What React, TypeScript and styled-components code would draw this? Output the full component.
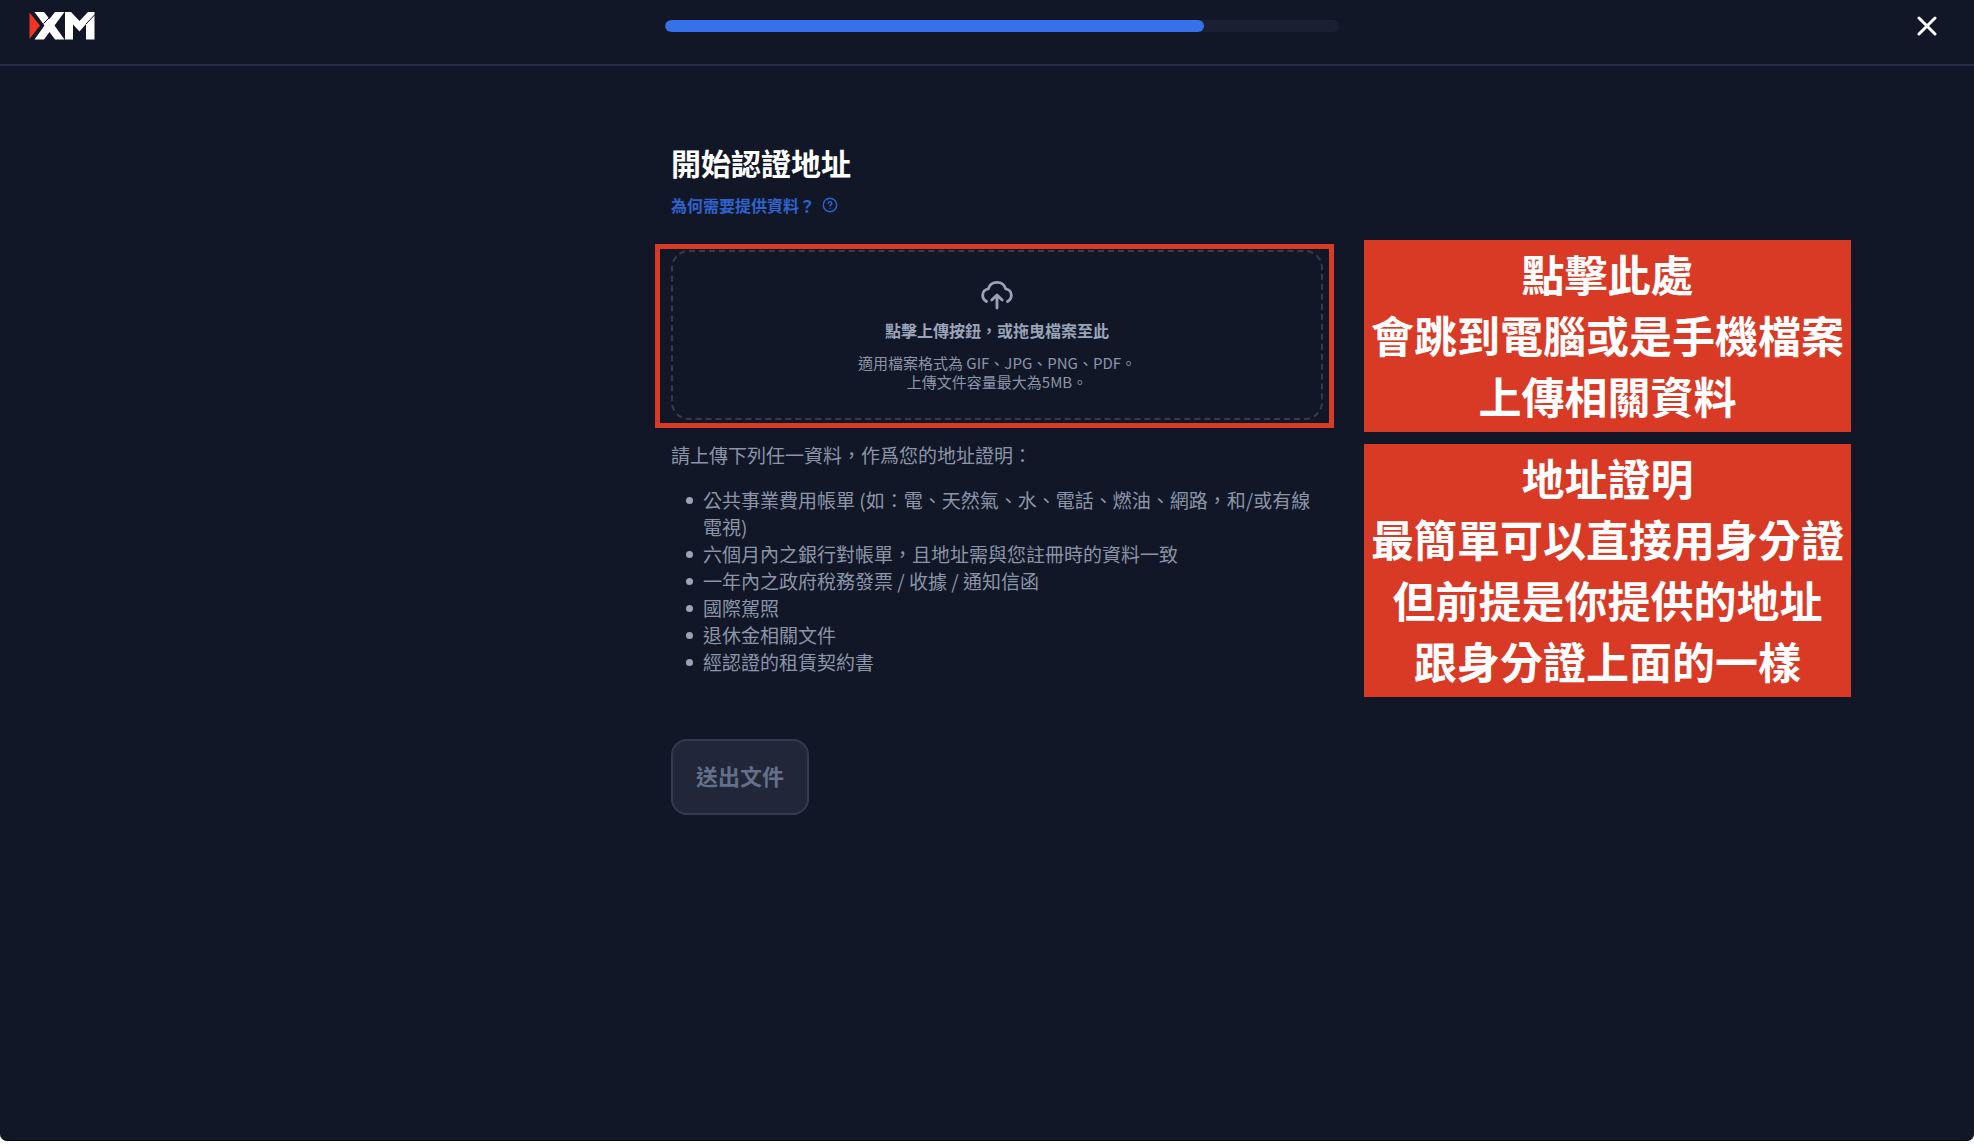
import React from "react";
import styled, { createGlobalStyle } from "styled-components";

const color = {
  page: "#111727",
  line: "#282f44",
  track: "#1a2032",
  blue: "#3571e8",
  link: "#2f62cc",
  muted: "#8c95a8",
  soft: "#9aa4b8",
  red: "#d93a26",
};

const GlobalStyle = createGlobalStyle`
  *, *::before, *::after { box-sizing: border-box; }
  html { background: #fff; }
  body {
    margin: 0;
    color: ${color.muted};
    font-family: "Noto Sans CJK TC", "Noto Sans", sans-serif;
  }
`;

const Page = styled.div`
  min-height: calc(100vh - 3px);
  overflow: hidden;
  border-bottom: 1px solid #070a12;
  border-radius: 0 0 7px 7px;
  background: ${color.page};
`;

const Header = styled.header`
  display: flex;
  align-items: center;
  justify-content: space-between;
  padding: 8px 29px 20px;
  border-bottom: 2px solid ${color.line};
`;

const LogoLink = styled.a`
  display: flex;
  svg { display: block; }
`;

const Progress = styled.div`
  flex: 0 1 674px;
  height: 12px;
  border-radius: 6px;
  overflow: hidden;
  background: ${color.track};
`;

const ProgressFill = styled.div`
  height: 100%;
  border-radius: 6px;
  background: ${color.blue};
`;

const CloseButton = styled.button`
  display: flex;
  padding: 8px;
  border: 0;
  background: none;
  color: #fff;
  cursor: pointer;
`;

const Main = styled.main`
  display: grid;
  grid-template-columns: 1fr minmax(0, 652px) 1fr;
  column-gap: 41px;
  align-items: start;
  padding-left: 20px;
`;

const Content = styled.section`
  grid-column: 2;
  padding-top: 74px;
`;

const Title = styled.h1`
  margin: 0;
  font-size: 30px;
  line-height: 44px;
  font-weight: 700;
  color: #fff;
`;

const HelpLink = styled.a`
  display: flex;
  align-items: center;
  gap: 7px;
  width: fit-content;
  margin-top: 9px;
  font-size: 16px;
  line-height: 24px;
  font-weight: 700;
  color: ${color.link};
  text-decoration: none;
`;

const UploadArea = styled.div`
  position: relative;
  margin-top: 33px;
`;

const DropZone = styled.label`
  display: flex;
  flex-direction: column;
  align-items: center;
  padding: 28px 16px 27px;
  border: 2px dashed #343b4e;
  border-radius: 18px;
  text-align: center;
  cursor: pointer;
  svg { display: block; }
`;

const FileInput = styled.input`
  position: absolute;
  width: 1px;
  height: 1px;
  opacity: 0;
`;

const DropTitle = styled.span`
  margin-top: 8px;
  font-size: 16px;
  line-height: 24px;
  font-weight: 700;
  color: ${color.soft};
`;

const DropHint = styled.span`
  margin-top: 11px;
  font-size: 15px;
  line-height: 19px;
`;

const Highlight = styled.div`
  position: absolute;
  inset: -6px -11px -8px -16px;
  border: 5px solid ${color.red};
  pointer-events: none;
`;

const Lead = styled.p`
  margin: 21px 0 0;
  font-size: 19px;
  line-height: 27px;
`;

const DocumentList = styled.ul`
  margin: 18px 0 0;
  padding-left: 15px;
  list-style: none;
  font-size: 19px;
  line-height: 27px;
`;

const DocumentItem = styled.li`
  display: flex;
  gap: 10px;

  &::before {
    content: "";
    flex: none;
    width: 7px;
    height: 7px;
    margin-top: 11px;
    border-radius: 50%;
    background: ${color.soft};
  }
`;

const SubmitButton = styled.button`
  margin-top: 64px;
  padding: 18px 23px 22px;
  border: 2px solid #343b50;
  border-radius: 16px;
  background: #212638;
  color: #64708a;
  font-family: inherit;
  font-size: 22px;
  line-height: 32px;
  font-weight: 700;
`;

const Notes = styled.aside`
  grid-column: 3;
  display: flex;
  flex-direction: column;
  align-items: flex-start;
  gap: 12px;
  padding-top: 174px;
`;

const Note = styled.p`
  margin: 0;
  padding: 3px 7px 6px;
  background: ${color.red};
  color: #fff;
  font-size: 43px;
  line-height: 61px;
  font-weight: 700;
  text-align: center;
  white-space: nowrap;
`;

const documents = [
  "公共事業費用帳單 (如：電、天然氣、水、電話、燃油、網路，和/或有線電視)",
  "六個月內之銀行對帳單，且地址需與您註冊時的資料一致",
  "一年內之政府稅務發票 / 收據 / 通知信函",
  "國際駕照",
  "退休金相關文件",
  "經認證的租賃契約書",
];

const notes = [
  ["點擊此處", "會跳到電腦或是手機檔案", "上傳相關資料"],
  ["地址證明", "最簡單可以直接用身分證", "但前提是你提供的地址", "跟身分證上面的一樣"],
];

const Logo = () => (
  <svg width="66" height="28" viewBox="0 0 66 28" aria-hidden="true">
    <path d="M0.500 0.500 L11 13.500 L0.500 27Z" fill="#ee3524" />
    <path
      d="M5.500 0H15L20.500 7L26 0H35.500L25.500 13.500L35.500 27.500H26L20.500 20L15 27.500H5.500L15.500 13.500Z"
      fill="#fff"
    />
    <path d="M14.500 11.500L20.500 5.500" stroke="#111727" strokeWidth="1" />
    <path d="M36 0H42L50.500 9L59 0H65.500V27.500H57V12L50.500 19.500L44 12.500V27.500H36Z" fill="#fff" />
    <path d="M57 12L66 2.500" stroke="#111727" strokeWidth="1" />
  </svg>
);

const CloseIcon = () => (
  <svg width="20" height="20" viewBox="0 0 20 20" fill="none" stroke="currentColor" strokeWidth="3" strokeLinecap="round" aria-hidden="true">
    <path d="M2 2L18 18M18 2L2 18" />
  </svg>
);

const HelpIcon = () => (
  <svg width="16" height="16" viewBox="0 0 16 16" fill="none" stroke="currentColor" strokeWidth="1.400" strokeLinecap="round" strokeLinejoin="round" aria-hidden="true">
    <circle cx="8" cy="8" r="6.700" />
    <path d="M6.200 6.400a1.800 1.800 0 1 1 2.600 1.600c-.5.250-.8.500-.8 1" />
    <path d="M8 11.200v.1" />
  </svg>
);

const CloudUploadIcon = () => (
  <svg width="32" height="30" viewBox="0 0 32 30" fill="none" stroke={color.soft} strokeWidth="2.800" strokeLinecap="round" strokeLinejoin="round" aria-hidden="true">
    <path d="M5.500 21.500C3 20 1.700 17.700 1.700 15.200C1.700 12 4 9.300 7.300 8.800C8.400 5 11.800 2.300 16 2.300S23.600 5 24.700 8.800C28 9.300 30.300 12 30.300 15.200C30.300 17.700 29 20 26.500 21.500" />
    <path d="M16 28V15.500M10.800 20L16 15L21.200 20" />
  </svg>
);

export default function App() {
  const progress = 80;
  return (
    <Page>
      <GlobalStyle />
      <Header>
        <LogoLink href="#" aria-label="XM">
          <Logo />
        </LogoLink>
        <Progress role="progressbar" aria-valuemin={0} aria-valuemax={100} aria-valuenow={progress}>
          <ProgressFill style={{ width: `${progress}%` }} />
        </Progress>
        <CloseButton type="button" aria-label="關閉">
          <CloseIcon />
        </CloseButton>
      </Header>
      <Main>
        <Content>
          <Title>開始認證地址</Title>
          <HelpLink href="#">
            為何需要提供資料？
            <HelpIcon />
          </HelpLink>
          <UploadArea>
            <DropZone htmlFor="address-proof">
              <CloudUploadIcon />
              <DropTitle>點擊上傳按鈕，或拖曳檔案至此</DropTitle>
              <DropHint>
                適用檔案格式為 GIF、JPG、PNG、PDF。
                <br />
                上傳文件容量最大為5MB。
              </DropHint>
              <FileInput id="address-proof" type="file" accept=".gif,.jpg,.png,.pdf" />
            </DropZone>
            <Highlight />
          </UploadArea>
          <Lead>請上傳下列任一資料，作爲您的地址證明：</Lead>
          <DocumentList>
            {documents.map((text) => (
              <DocumentItem key={text}>{text}</DocumentItem>
            ))}
          </DocumentList>
          <SubmitButton type="submit" disabled>
            送出文件
          </SubmitButton>
        </Content>
        <Notes>
          {notes.map((lines) => (
            <Note key={lines[0]}>
              {lines.map((line, index) => (
                <React.Fragment key={line}>
                  {index > 0 && <br />}
                  {line}
                </React.Fragment>
              ))}
            </Note>
          ))}
        </Notes>
      </Main>
    </Page>
  );
}
